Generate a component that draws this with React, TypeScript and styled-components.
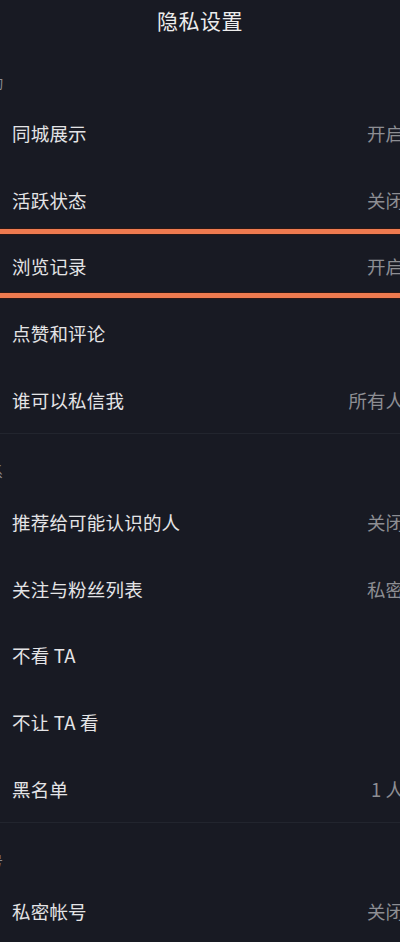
import React from 'react'
import styled, { createGlobalStyle } from 'styled-components'

const GlobalStyle = createGlobalStyle`
  html,
  body {
    margin: 0;
    padding: 0;
    background: #181a23;
    overflow: hidden;
  }
  body {
    font-family: 'Noto Sans CJK SC', 'Noto Sans', sans-serif;
    -webkit-font-smoothing: antialiased;
  }
`

const Page = styled.div`
  width: 400px;
  height: 942px;
  background: #181a23;
  overflow: hidden;
`

const TitleBar = styled.div`
  height: 45px;
  display: flex;
  justify-content: center;
  padding-top: 8px;
  box-sizing: border-box;
`

const Title = styled.h1`
  margin: 0;
  font-size: 21px;
  line-height: 24px;
  font-weight: 400;
  color: #ececec;
  letter-spacing: 0.5px;
`

const Section = styled.section<{ divided?: boolean }>`
  border-top: ${(props) => (props.divided ? '1px solid #22252e' : 'none')};
`

const SectionHeader = styled.div`
  padding: 27px 0 8px;
  line-height: 20px;
  font-size: 14px;
  color: #8b8c92;
  white-space: nowrap;
  margin-left: -25px;
`

const Row = styled.div<{ marked?: boolean }>`
  position: relative;
  height: 66.6px;
  display: flex;
  align-items: center;
  justify-content: space-between;
  padding-left: 12px;
  margin-right: -4px;

  ${(props) =>
    props.marked &&
    `
    &::before,
    &::after {
      content: '';
      position: absolute;
      left: -10px;
      right: -10px;
      height: 5px;
      background: #ee7a4f;
      box-shadow: 0 0 0 1px #2b1815;
      z-index: 1;
    }
    &::before {
      top: -4px;
    }
    &::after {
      bottom: 2px;
    }
  `}
`

const Label = styled.span`
  font-size: 18.5px;
  color: #e4e4e6;
  letter-spacing: 0.2px;
`

const Value = styled.span`
  font-size: 18.5px;
  color: #8d8e93;
  white-space: nowrap;
`

type Item = { label: string; value?: string; marked?: boolean }

const sections: { header: string; items: Item[] }[] = [
  {
    header: '互动',
    items: [
      { label: '同城展示', value: '开启' },
      { label: '活跃状态', value: '关闭' },
      { label: '浏览记录', value: '开启', marked: true },
      { label: '点赞和评论' },
      { label: '谁可以私信我', value: '所有人' },
    ],
  },
  {
    header: '关系',
    items: [
      { label: '推荐给可能认识的人', value: '关闭' },
      { label: '关注与粉丝列表', value: '私密' },
      { label: '不看 TA' },
      { label: '不让 TA 看' },
      { label: '黑名单', value: '1 人' },
    ],
  },
  {
    header: '账号',
    items: [{ label: '私密帐号', value: '关闭' }],
  },
]

export default function App() {
  return (
    <Page>
      <GlobalStyle />
      <TitleBar>
        <Title>隐私设置</Title>
      </TitleBar>
      {sections.map((section, i) => (
        <Section key={section.header} divided={i > 0}>
          <SectionHeader>{section.header}</SectionHeader>
          {section.items.map((item) => (
            <Row key={item.label} marked={item.marked}>
              <Label>{item.label}</Label>
              {item.value && <Value>{item.value}</Value>}
            </Row>
          ))}
        </Section>
      ))}
    </Page>
  )
}
